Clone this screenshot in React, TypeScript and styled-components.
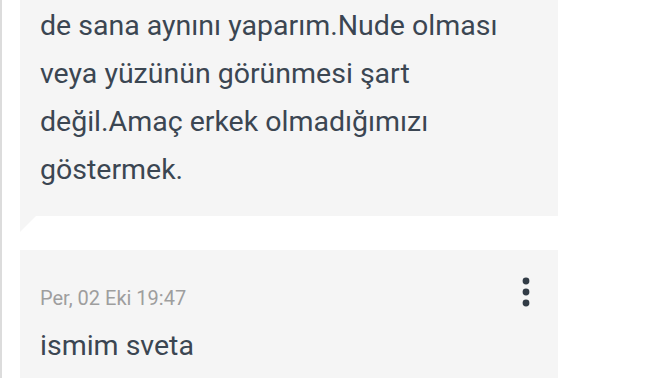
import * as React from 'react';
import styled, { createGlobalStyle } from 'styled-components';

const GlobalStyle = createGlobalStyle`
    html, body {
        margin: 0;
        padding: 0;
        background: #ffffff;
    }
    body {
        font-family: Roboto, "Noto Sans", "Liberation Sans", sans-serif;
    }
`;

const Thread = styled.div`
    display: flex;
    flex-direction: column;
    gap: 34px;
    width: 672px;
    height: 378px;
    overflow: hidden;
    box-sizing: border-box;
    border-left: 2px solid #dcdcdc;
    padding-left: 18px;
`;

const Bubble = styled.div<{ $tail?: boolean; $top: number }>`
    position: relative;
    width: 538px;
    box-sizing: border-box;
    background: #f5f5f5;
    padding: ${(p) => p.$top}px 20px 22px 20px;

    ${(p) => p.$tail && `
        &::after {
            content: '';
            position: absolute;
            left: 0;
            bottom: -16px;
            border-top: 16px solid #f5f5f5;
            border-right: 16px solid transparent;
        }
    `}
`;

const Header = styled.div`
    display: flex;
    justify-content: space-between;
    align-items: flex-start;
`;

const Stamp = styled.span`
    margin-top: 11px;
    font-size: 20px;
    line-height: 28px;
    color: #9e9e9e;
`;

const Body = styled.p<{ $gap?: number }>`
    margin: ${(p) => p.$gap || 0}px 0 0 0;
    font-size: 28.5px;
    line-height: 48px;
    color: #3b4652;
`;

const MenuButton = styled.button`
    display: flex;
    padding: 0;
    border: 0;
    background: none;
    cursor: pointer;
`;

function MoreIcon() {
    return (
        <svg width="24" height="38" viewBox="0 0 24 38">
            <circle cx="12" cy="8" r="3.4" fill="#323c46" />
            <circle cx="12" cy="19" r="3.4" fill="#323c46" />
            <circle cx="12" cy="30" r="3.4" fill="#323c46" />
        </svg>
    );
}

export default function App() {
    return (
        <>
            <GlobalStyle />
            <Thread>
                <Bubble $tail $top={2}>
                    <Body>
                        de sana aynını yaparım.Nude olması
                        <br />
                        veya yüzünün görünmesi şart
                        <br />
                        değil.Amaç erkek olmadığımızı
                        <br />
                        göstermek.
                    </Body>
                </Bubble>
                <Bubble $top={23}>
                    <Header>
                        <Stamp>Per, 02 Eki 19:47</Stamp>
                        <MenuButton aria-label="Seçenekler">
                            <MoreIcon />
                        </MenuButton>
                    </Header>
                    <Body $gap={10}>ismim sveta</Body>
                </Bubble>
            </Thread>
        </>
    );
}
